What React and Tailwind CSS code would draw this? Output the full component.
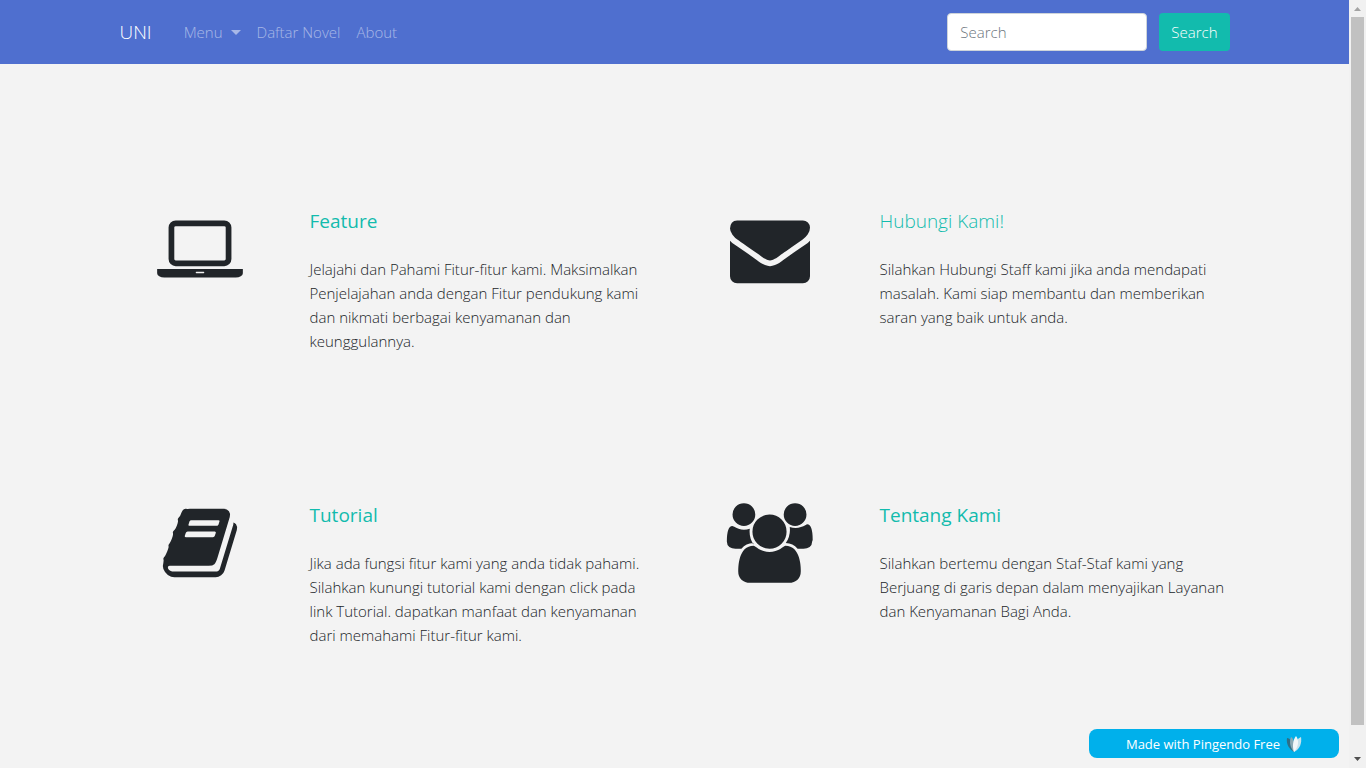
const icons = {
  laptop: {
    box: "0 0 1920 1792",
    cls: "h-20 w-[86px]",
    d: "M416 1280q-66 0-113-47t-47-113v-704q0-66 47-113t113-47h1088q66 0 113 47t47 113v704q0 66-47 113t-113 47h-1088zm-32-864v704q0 13 9.5 22.5t22.5 9.5h1088q13 0 22.5-9.5t9.5-22.5v-704q0-13-9.5-22.5t-22.5-9.5h-1088q-13 0-22.5 9.5t-9.5 22.5zm1376 928h160v96q0 40-47 68t-113 28h-1600q-66 0-113-28t-47-68v-96h1760zm-720 96q16 0 16-16t-16-16h-160q-16 0-16 16t16 16h160z",
  },
  envelope: {
    box: "0 0 1792 1792",
    cls: "size-20",
    d: "M1792 710v794q0 66-47 113t-113 47h-1472q-66 0-113-47t-47-113v-794q44 49 101 87 362 246 497 345 57 42 92.5 65.5t94.5 48 110 24.5h2q51 0 110-24.5t94.5-48 92.5-65.5q170-123 498-345 57-39 100-87zm0-294q0 79-49 151t-122 123q-376 261-468 325-10 7-42.5 31t-54 38.5-52 32.5-57.5 27-50 9h-2q-23 0-50-9t-57.5-27-52-32.5-54-38.5-42.5-31q-91-64-262-182.5t-205-142.5q-62-42-117-115.5t-55-136.5q0-78 41.5-130t118.5-52h1472q65 0 112.5 47t47.5 113z",
  },
  book: {
    box: "0 0 1792 1792",
    cls: "size-20",
    d: "M1703 478q40 57 18 129l-275 906q-19 64-76.5 107.5t-122.5 43.5h-923q-77 0-148.5-53.5t-99.5-131.5q-24-67-2-127 0-4 3-27t4-37q1-8-3-21.5t-3-19.5q2-11 8-21t16.5-23.5 16.5-23.5q23-38 45-91.5t30-91.5q3-10 .5-30t-.5-28q3-11 17-28t17-23q21-36 42-92t25-90q1-9-2.5-32t.5-28q4-13 22-30.5t22-22.5q19-26 42.5-84.5t27.5-96.5q1-8-3-25.5t-2-26.5q2-8 9-18t18-23 17-21q8-12 16.5-30.5t15-35 16-36 19.5-32 26.5-23.5 36-11.5 47.5 5.5l-1 3q38-9 51-9h761q74 0 114 56t18 130l-274 906q-36 119-71.5 153.5t-128.5 34.5h-869q-27 0-38 15-11 16-1 43 24 70 144 70h923q29 0 56-15.5t35-41.5l300-987q7-22 5-57 38 15 59 43zm-1064 2q-4 13 2 22.5t20 9.5h608q13 0 25.5-9.5t16.5-22.5l21-64q4-13-2-22.5t-20-9.5h-608q-13 0-25.5 9.5t-16.5 22.5zm-83 256q-4 13 2 22.5t20 9.5h608q13 0 25.5-9.5t16.5-22.5l21-64q4-13-2-22.5t-20-9.5h-608q-13 0-25.5 9.5t-16.5 22.5z",
  },
  group: {
    box: "0 0 2048 1792",
    cls: "h-20 w-[91px]",
    d: "M657 896q-162 5-265 128h-134q-82 0-138-40.5t-56-118.5q0-353 124-353 6 0 43.5 21t97.5 42.5 119 21.5q67 0 133-23-5 37-5 66 0 159 93 294zm1071 637q0 120-73 189.5t-194 69.5h-874q-121 0-194-69.5t-73-189.5q0-53 3.5-103.5t14-109 26.5-108.5 43-97.5 62-81 85.5-53.5 111.5-20q10 0 43 21.5t73 48 107 48 135 21.5 135-21.5 107-48 73-48 43-21.5q61 0 111.5 20t85.5 53.5 62 81 43 97.5 26.5 108.5 14 109 3.5 103.5zm-1024-1277q0 106-75 181t-181 75-181-75-75-181 75-181 181-75 181 75 75 181zm704 384q0 159-112.5 271.5t-271.5 112.5-271.5-112.5-112.5-271.5 112.5-271.5 271.5-112.5 271.5 112.5 112.5 271.5zm576 225q0 78-56 118.5t-138 40.5h-134q-103-123-265-128 93-135 93-294 0-29-5-66 66 23 133 23 59 0 119-21.5t97.5-42.5 43.5-21q124 0 124 353zm-128-609q0 106-75 181t-181 75-181-75-75-181 75-181 181-75 181 75 75 181z",
  },
};

const features = [
  {
    icon: "laptop",
    title: "Feature",
    text: "Jelajahi dan Pahami Fitur-fitur kami. Maksimalkan Penjelajahan anda dengan Fitur pendukung kami dan nikmati berbagai kenyamanan dan keunggulannya.",
  },
  {
    icon: "envelope",
    title: "Hubungi Kami!",
    link: true,
    text: "Silahkan Hubungi Staff kami jika anda mendapati masalah. Kami siap membantu dan memberikan saran yang baik untuk anda.",
  },
  {
    icon: "book",
    title: "Tutorial",
    text: "Jika ada fungsi fitur kami yang anda tidak pahami. Silahkan kunungi tutorial kami dengan click pada link Tutorial. dapatkan manfaat dan kenyamanan dari memahami Fitur-fitur kami.",
  },
  {
    icon: "group",
    title: "Tentang Kami",
    text: "Silahkan bertemu dengan Staf-Staf kami yang Berjuang di garis depan dalam menyajikan Layanan dan Kenyamanan Bagi Anda.",
  },
];

function Navbar() {
  return (
    <nav className="bg-[#4f6fcf]">
      <div className="mx-auto flex h-16 max-w-[1140px] items-center px-[15px]">
        <a href="#" className="mr-6 text-[19px] text-white">UNI</a>
        <ul className="flex flex-1 items-center text-white/50">
          <li>
            <button type="button" className="flex items-center gap-2 px-2">
              Menu
              <svg viewBox="0 0 10 5" className="h-[5px] w-[10px]" fill="currentColor" aria-hidden="true">
                <path d="M0 0h10L5 5z" />
              </svg>
            </button>
          </li>
          <li><a href="#" className="px-2">Daftar Novel</a></li>
          <li><a href="#" className="px-2">About</a></li>
        </ul>
        <form className="flex gap-3" onSubmit={(e) => e.preventDefault()}>
          <input
            type="text"
            aria-label="Search"
            placeholder="Search"
            className="h-[38px] w-[200px] rounded border border-[#ced4da] bg-white px-3 text-[#495057] placeholder:text-[#6c757d]"
          />
          <button type="submit" className="h-[38px] rounded bg-[#12bbad] px-3 text-white">Search</button>
        </form>
      </div>
    </nav>
  );
}

function Feature({ icon, title, text, link }) {
  const { box, cls, d } = icons[icon];
  return (
    <article className="flex">
      <div className="flex w-1/3 justify-center">
        <svg viewBox={box} className={`${cls} shrink-0`} fill="#212529" aria-hidden="true">
          <path d={d} />
        </svg>
      </div>
      <div className="w-2/3 px-[15px]">
        <h5 className="mb-6 text-[19px] leading-6 font-normal text-[#12bbad]">
          {link ? <a href="#" className="font-light">{title}</a> : title}
        </h5>
        <p>{text}</p>
      </div>
    </article>
  );
}

function Scrollbar() {
  return (
    <div className="flex w-[17px] shrink-0 flex-col items-center bg-[#f1f1f1]" aria-hidden="true">
      <svg viewBox="0 0 17 17" className="size-[17px]"><path d="M5 11h7L8.500 7z" fill="#a3a3a3" /></svg>
      <div className="flex w-full flex-1 flex-col px-[2px]">
        <div className="grow-[708] bg-[#c1c1c1]" />
        <div className="grow-[26]" />
      </div>
      <svg viewBox="0 0 17 17" className="size-[17px]"><path d="M5 6h7l-3.500 4z" fill="#505050" /></svg>
    </div>
  );
}

export default function App() {
  return (
    <div className="flex h-screen bg-[#f3f3f3] font-['Open_Sans',sans-serif] text-[15px] leading-6 font-light text-[#212529]">
      <div className="min-w-0 flex-1 overflow-hidden">
        <Navbar />
        <main className="mx-auto grid max-w-[1140px] grid-cols-2 gap-y-[150px] pt-[145px] pb-36">
          {features.map((f) => <Feature key={f.title} {...f} />)}
        </main>
      </div>
      <Scrollbar />
      <a
        href="#"
        className="fixed right-[27px] bottom-[10px] flex h-[29px] w-[250px] items-center justify-center gap-1.5 rounded-lg bg-[#00b0eb] text-[13px] font-normal text-white"
      >
        Made with Pingendo Free
        <svg viewBox="0 0 16 16" className="size-4" aria-hidden="true">
          <path d="M1 2c3 0 6 4 7 14C3 13 0 8 1 2z" fill="#2f6f86" />
          <path d="M5 1c3 2 4 6 3 15C4 11 3 6 5 1z" fill="#8aa9b4" />
          <path d="M15 1c1 6-1 12-7 15C7 9 10 3 15 1z" fill="#c9e3ec" />
          <path d="M10 0c3 4 3 10-2 16C6 10 7 4 10 0z" fill="#f2f7f9" />
        </svg>
      </a>
    </div>
  );
}
